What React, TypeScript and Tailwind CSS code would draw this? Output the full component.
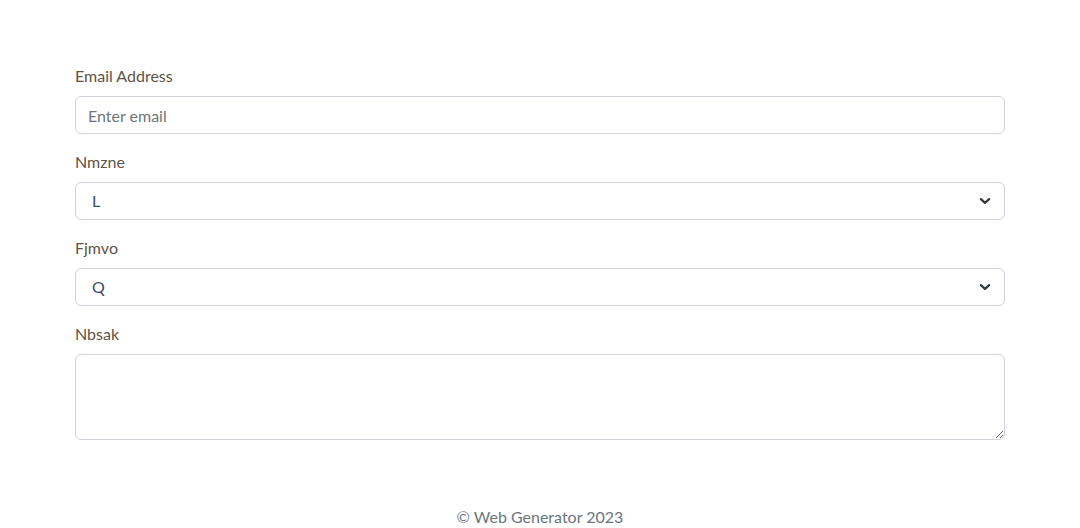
import React from 'react';

const FONT = "font-['Lato','Noto_Sans',sans-serif]";

function Chevron() {
  return (
    <svg
      className="pointer-events-none absolute right-[14px] top-1/2 -translate-y-1/2"
      width="12"
      height="9"
      viewBox="0 0 16 12"
      fill="none"
      stroke="#343a40"
      strokeWidth="3"
      strokeLinecap="round"
      strokeLinejoin="round"
    >
      <path d="m2.5 3.5 5.5 5 5.5-5" />
    </svg>
  );
}

function SelectField({ label, value }: { label: string; value: string }) {
  return (
    <div className="mb-4">
      <label className="mb-2 block leading-6 text-[#5f5346]">{label}</label>
      <div className="relative">
        <select
          defaultValue={value}
          className="block h-[38px] w-full appearance-none rounded-md border border-[#ced4da] bg-white pl-4 pr-9 text-base text-[#3f4a63] outline-none"
        >
          <option value={value}>{value}</option>
        </select>
        <Chevron />
      </div>
    </div>
  );
}

export default function App() {
  return (
    <div className={`${FONT} min-h-[528px] bg-white text-base text-[#212529]`}>
      <main className="mx-auto w-[930px] pt-16">
        <div className="mb-4">
          <label className="mb-2 block leading-6 text-[#5f5346]">Email Address</label>
          <input
            type="email"
            placeholder="Enter email"
            className="block h-[38px] w-full rounded-md border border-[#ced4da] px-3 text-base text-[#212529] outline-none placeholder:text-[#6c757d]"
          />
        </div>
        <SelectField label="Nmzne" value="L" />
        <SelectField label="Fjmvo" value="Q" />
        <div>
          <label className="mb-2 block leading-6 text-[#5f5346]">Nbsak</label>
          <textarea
            rows={3}
            className="block h-[86px] w-full rounded-md border border-[#ced4da] px-3 py-1.5 text-base outline-none"
          />
        </div>
      </main>
      <footer className="pt-[65px] text-center leading-6 text-[#6c757d]">
        © Web Generator 2023
      </footer>
    </div>
  );
}
